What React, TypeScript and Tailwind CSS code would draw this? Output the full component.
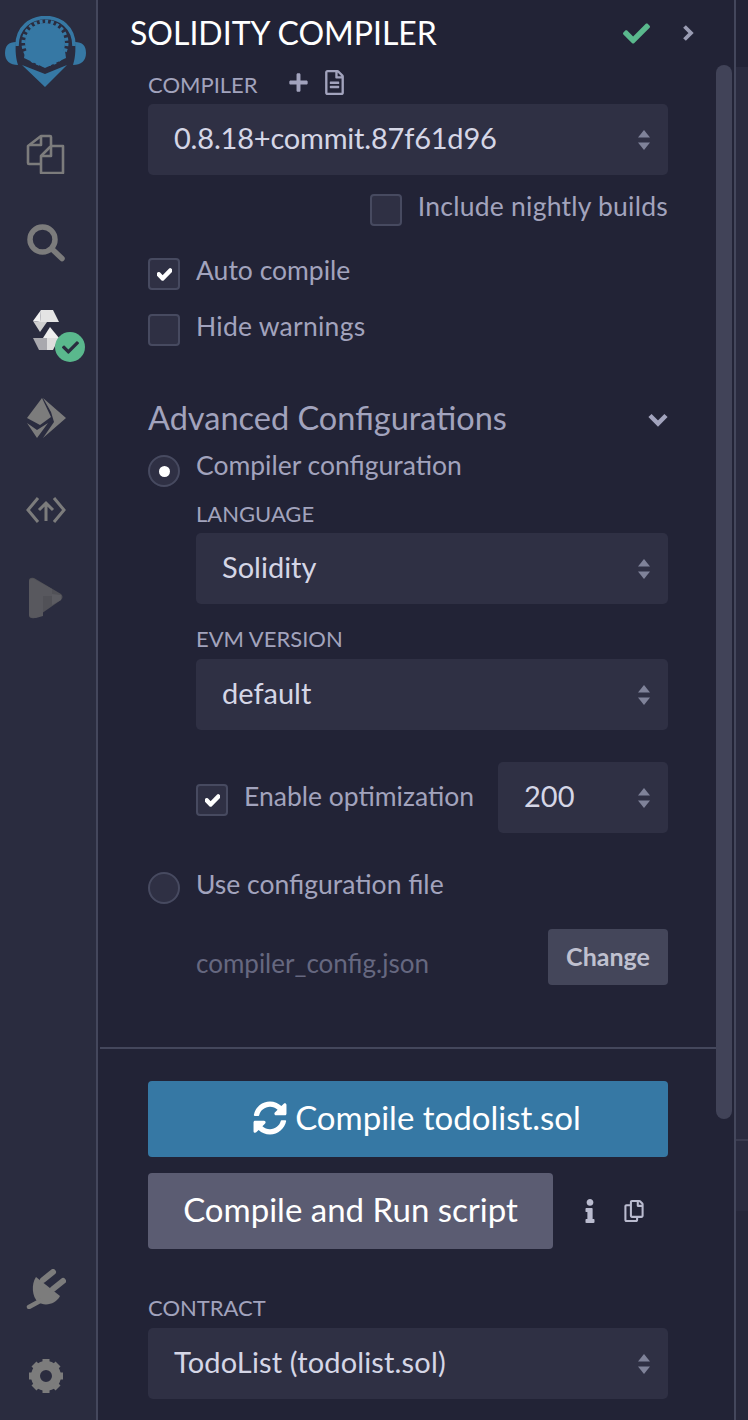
import { FaCheck, FaInfo, FaPlus, FaRegCopy, FaRegFileAlt, FaSyncAlt } from 'react-icons/fa';

const FONT = "font-['Lato','Noto_Sans',sans-serif]";
const COG_TEETH = [0, 45, 90, 135, 180, 225, 270, 315];

function Arrows() {
  return (
    <svg width="14" height="24" viewBox="0 0 14 24" className="shrink-0">
      <path d="M7 2l6 7.500H1z" fill="#7f8299" />
      <path d="M7 22l-6-7.500h12z" fill="#7f8299" />
    </svg>
  );
}

function Select({ value, className = '' }: { value: string; className?: string }) {
  return (
    <div className={`flex h-[71px] items-center justify-between rounded-[5px] bg-[#2f3044] pl-[26px] pr-[17px] text-[29px] text-[#d5d6e6] ${className}`}>
      <span className="mb-[4px]">{value}</span>
      <Arrows />
    </div>
  );
}

function Checkbox({ checked = false }: { checked?: boolean }) {
  return (
    <div className="flex size-8 shrink-0 items-center justify-center rounded-[4px] border-2 border-[#474a60] bg-[#2f3044]">
      {checked && <FaCheck size={15} stroke="currentColor" strokeWidth={50} className="text-white" />}
    </div>
  );
}

function Radio({ checked = false }: { checked?: boolean }) {
  return (
    <div className="flex size-8 shrink-0 items-center justify-center rounded-full border-2 border-[#474a60] bg-[#2f3044]">
      {checked && <div className="size-[11px] rounded-full bg-white" />}
    </div>
  );
}

function Row({ label, children, className = '', labelClass = 'mb-[8px]' }: { label: string; children: React.ReactNode; className?: string; labelClass?: string }) {
  return (
    <div className={`flex h-8 items-center gap-4 ${className}`}>
      {children}
      <span className={`whitespace-nowrap leading-none ${labelClass}`}>{label}</span>
    </div>
  );
}

function Sidebar() {
  return (
    <aside className="flex h-[1420px] w-[98px] shrink-0 flex-col items-center border-r-2 border-[#44475c] bg-[#2a2c3f] pr-[6px]">
      {/* Remix logo */}
      <svg width="84" height="72" viewBox="0 0 84 72" className="mt-[16px] ml-[2px]">
        <path d="M13 30C13 -8 70 -8 70 30" fill="none" stroke="#3678a4" strokeWidth="3.500" />
        <path d="M12 26q-11 0-11 11c0 8 5 12 13 12-2-6-3-15-2-23z" fill="#3678a4" />
        <path d="M71 26q11 0 11 11c0 8-5 12-13 12 2-6 3-15 2-23z" fill="#3678a4" />
        <path d="M18 49l23 22 22-22-22 9z" fill="#3678a4" />
        <circle cx="41" cy="27" r="20" fill="#3678a4" />
        <circle cx="41" cy="27" r="21.500" fill="none" stroke="#3678a4" strokeWidth="4" strokeDasharray="3 2.600" />
        <path d="M21 35l-1 7 21 10 21-10-1-7z" fill="#3678a4" />
      </svg>

      {/* file explorer */}
      <svg width="40" height="40" viewBox="0 0 40 40" className="mt-[46px] ml-[2px]" fill="none" stroke="#7c7c7c" strokeWidth="2.600" strokeLinejoin="round">
        <path d="M25 11V3a1 1 0 0 0-1-1h-9L2 12v17a1 1 0 0 0 1 1h11" />
        <path d="M15 2v9H4" />
        <path d="M37 12H25L15 22v17h22z" />
        <path d="M25 12v10H15" />
      </svg>

      {/* search */}
      <svg width="38" height="38" viewBox="0 0 38 38" className="mt-[50px] ml-[2px]" fill="none" stroke="#7c7c7c" strokeLinecap="round">
        <circle cx="15.500" cy="15.500" r="12.500" strokeWidth="5.500" />
        <path d="M26 26l9 8.500" strokeWidth="5.500" />
      </svg>

      {/* solidity */}
      <div className="relative mt-[48px] ml-[4px] h-[44px] w-[28px]">
        <svg width="28" height="40" viewBox="0 0 28 40">
          <path d="M8 0h12l6 12H7z" fill="#e4e4e4" />
          <path d="M8 0L0 11l7 1z" fill="#f2f2f2" />
          <path d="M0 11l7 1 7 0-7 10z" fill="#cfcfcf" />
          <path d="M0 28h14l-0 12H6z" fill="#a9a9ae" />
          <path d="M14 28h12l-6 12h-6z" fill="#dedede" />
          <path d="M17 17l9 11H10z" fill="#eeeeee" />
        </svg>
        <div className="absolute left-[22px] top-[22px] flex size-[30px] items-center justify-center rounded-full bg-[#5ab88d]">
          <FaCheck size={17} className="text-[#2a2c3f]" />
        </div>
      </div>

      {/* deploy */}
      <svg width="40" height="40" viewBox="0 0 40 40" className="mt-[44px] ml-[2px]" fill="#7c7c7c">
        <path d="M16 0L1 20l13 7 11-8z" />
        <path d="M1 25l10 7 11-7-11 15z" />
        <path d="M17 0l23 20-23 20 11-16-3-10z" />
      </svg>

      {/* recorder */}
      <svg width="40" height="26" viewBox="0 0 40 26" className="mt-[59px] ml-[2px]" fill="none" stroke="#7c7c7c" strokeWidth="3">
        <path d="M12 1L2 13l10 12" />
        <path d="M28 1l10 12-10 12" />
        <path d="M20 24V6M13 13l7-7 7 7" />
      </svg>

      {/* debugger */}
      <svg width="36" height="42" viewBox="0 0 36 42" className="mt-[54px] ml-[2px]">
        <path d="M1 4q0-4 5-3l27 16q3 3 0 6L7 41q-6 1-6-3z" fill="#515157" />
        <path d="M1 5q0-4 5-3l18 10v7h-9v20l-7 2q-7 0-7-3z" fill="#58585e" />
        <path d="M24 17l9 1v5l-9 5z" fill="#5c5c62" />
      </svg>

      <div className="flex-1" />

      {/* plugin manager */}
      <svg width="40" height="40" viewBox="0 0 40 40" className="ml-[2px]" fill="#7c7c7c">
        <path d="M10 8l24 19c-4 8-15 11-22 6C6 28 5 15 10 8z" />
        <path d="M14 32L3 38" stroke="#7c7c7c" strokeWidth="4.500" strokeLinecap="round" />
        <path d="M17 11L27 3M27 20l10-8" fill="none" stroke="#7c7c7c" strokeWidth="6" strokeLinecap="round" />
      </svg>

      <svg width="34" height="34" viewBox="0 0 34 34" className="mt-[50px] mb-[27px] ml-[2px]" fill="#7c7c7c">
        <circle cx="17" cy="17" r="10.500" fill="none" stroke="#7c7c7c" strokeWidth="9" />
        {COG_TEETH.map((a) => (
          <rect key={a} x="13.500" y="0" width="7" height="6" transform={`rotate(${a} 17 17)`} />
        ))}
      </svg>
    </aside>
  );
}

function Panel() {
  return (
    <main className="relative min-w-0 flex-1 overflow-hidden bg-[#222336]">
      <header className="flex h-[66px] items-center pl-[32px] pr-[40px]">
        <h1 className="text-[32px] text-white">SOLIDITY COMPILER</h1>
        <FaCheck size={27} className="ml-auto text-[#5ab88d]" />
        <svg width="12" height="16" viewBox="0 0 12 16" fill="none" stroke="#9a9cb3" strokeWidth="3.800" className="ml-[32px]">
          <path d="M2.500 1.500L9 8l-6.500 6.500" />
        </svg>
      </header>

      <div className="w-[570px] pl-[50px] text-[26.500px] text-[#a2a3bd]">
        <div className="flex h-[38px] items-center gap-[30px] pb-[2px] text-[22px]">
          <span>COMPILER</span>
          <div className="mb-1 flex items-center gap-[13px]">
            <FaPlus size={21} />
            <FaRegFileAlt size={25} />
          </div>
        </div>
        <Select value="0.8.18+commit.87f61d96" className="tracking-[-0.2px]" />

        <Row label="Include nightly builds" className="mt-[19px] justify-end" labelClass="mb-[8px] tracking-[0.24px]">
          <Checkbox />
        </Row>
        <Row label="Auto compile" className="mt-[32px]">
          <Checkbox checked />
        </Row>
        <Row label="Hide warnings" className="mt-[24px]" labelClass="mb-[8px] tracking-[0.25px]">
          <Checkbox />
        </Row>

        <div className="mt-[48px] flex h-[48px] items-center justify-between">
          <span className="text-[32.500px]">Advanced Configurations</span>
          <svg width="20" height="14" viewBox="0 0 20 14" fill="none" stroke="#a2a3bd" strokeWidth="4.500" className="mt-1">
            <path d="M2 2.500l8 8 8-8" />
          </svg>
        </div>
        <Row label="Compiler configuration" className="mt-[13px]" labelClass="mb-[12px]">
          <Radio checked />
        </Row>

        <div className="pl-[48px]">
          <div className="mt-[10px] flex h-[34px] items-center pb-[2px] text-[22px]">LANGUAGE</div>
          <Select value="Solidity" className="mt-[2px]" />
          <div className="mt-[18px] flex h-[34px] items-center pb-[2px] text-[22px]">EVM VERSION</div>
          <Select value="default" className="mt-[3px]" />

          <div className="mt-[32px] flex items-center">
            <Row label="Enable optimization" className="mt-[5px]">
              <Checkbox checked />
            </Row>
            <Select value="200" className="ml-auto w-[170px]" />
          </div>
        </div>

        <Row label="Use configuration file" className="mt-[39px]">
          <Radio />
        </Row>
        <div className="mt-[25px] flex h-[56px] items-center justify-between pl-[48px]">
          <span className="mt-[12px] text-[26px] text-[#666880]">compiler_config.json</span>
          <button className="flex h-[56px] w-[120px] items-center justify-center rounded-[4px] bg-[#44465a] text-[25px] font-bold text-[#bfc0cf]">Change</button>
        </div>
      </div>

      <div className="mt-[62px] mr-[18px] ml-[2px] h-[2px] bg-[#44475c]" />

      <div className="w-[570px] pl-[50px] text-[#a2a3bd]">
        <button className="mt-[32px] flex h-[76px] w-full items-center justify-center gap-[8px] rounded-[4px] bg-[#3678a4] pb-[2px] pl-[18px] text-[33px] text-white">
          <FaSyncAlt size={34} />
          Compile todolist.sol
        </button>
        <div className="mt-[16px] flex items-center">
          <button className="h-[76px] w-[405px] rounded-[4px] bg-[#5b5c72] pb-[2px] text-[33px] text-white">Compile and Run script</button>
          <FaInfo size={24} className="ml-[25px] text-[#babbcf]" />
          <FaRegCopy size={22} className="ml-[21px] text-[#babbcf]" />
        </div>
        <div className="mt-[42px] flex h-[34px] items-center pb-[2px] text-[22px]">CONTRACT</div>
        <Select value="TodoList (todolist.sol)" className="mt-[3px] tracking-[0.15px]" />
      </div>

      {/* scrollbar */}
      <div className="absolute left-[618px] top-[65px] h-[1054px] w-[16px] rounded-full bg-[#414358]" />
    </main>
  );
}

function RightStrip() {
  return (
    <div className="flex h-[1420px] w-[14px] shrink-0 flex-col border-l-2 border-[#44475c] bg-[#222336]">
      <div className="h-[67px]" />
      <div className="h-[1074px] border-b-2 border-[#3a3b4f] bg-[#2a2b3f]" />
      <div className="h-[70px] bg-[#2a2b3f]" />
      <div className="flex-1 bg-[#26273a]" />
    </div>
  );
}

export default function App() {
  return (
    <div className={`flex h-[1420px] w-[748px] overflow-hidden ${FONT}`}>
      <Sidebar />
      <Panel />
      <RightStrip />
    </div>
  );
}
